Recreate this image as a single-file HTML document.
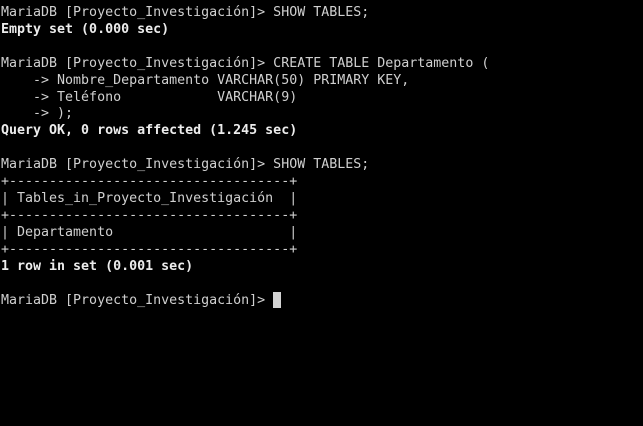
<!DOCTYPE html>
<html><head><meta charset="utf-8"><style>
html,body{margin:0;padding:0;background:#000;width:643px;height:426px;overflow:hidden}
pre{margin:0;padding:5px 0 0 1px;font-family:"DejaVu Sans Mono","Liberation Mono",monospace;font-size:13.3px;line-height:16.9px;color:#d0d0d0;white-space:pre}
b{color:#ececec;font-weight:bold}
.c{display:inline-block;width:8px;height:16px;background:#d3d3d3;vertical-align:-4px}
</style></head><body><pre>MariaDB [Proyecto_Investigación]&gt; SHOW TABLES;
<b>Empty set (0.000 sec)</b>

MariaDB [Proyecto_Investigación]&gt; CREATE TABLE Departamento (
    -&gt; Nombre_Departamento VARCHAR(50) PRIMARY KEY,
    -&gt; Teléfono            VARCHAR(9)
    -&gt; );
<b>Query OK, 0 rows affected (1.245 sec)</b>

MariaDB [Proyecto_Investigación]&gt; SHOW TABLES;
+-----------------------------------+
| Tables_in_Proyecto_Investigación  |
+-----------------------------------+
| Departamento                      |
+-----------------------------------+
<b>1 row in set (0.001 sec)</b>

MariaDB [Proyecto_Investigación]&gt; <span class="c"></span></pre></body></html>
